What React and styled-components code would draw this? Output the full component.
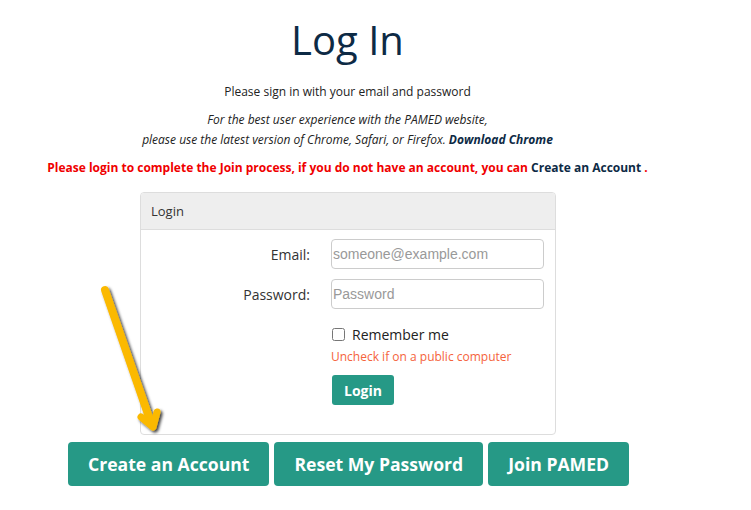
import styled, { createGlobalStyle } from 'styled-components';

const GlobalStyle = createGlobalStyle`
	body {
		margin: 0;
		background: #ffffff;
		font-family: 'Open Sans', 'Noto Sans', sans-serif;
		color: #333333;
	}
`;

export default function App() {
	return (
		<>
			<GlobalStyle />
			<Page>
				<Title>Log In</Title>
				<Subtitle>Please sign in with your email and password</Subtitle>
				<BrowserNote>
					For the best user experience with the PAMED website,
					<br />
					please use the latest version of Chrome, Safari, or Firefox.{' '}
					<strong>Download Chrome</strong>
				</BrowserNote>
				<Warning>
					Please login to complete the Join process, if you do not have an account, you can{' '}
					<span>Create an Account</span> .
				</Warning>

				<Panel>
					<PanelHeader>Login</PanelHeader>
					<PanelBody>
						<Label>Email:</Label>
						<Input type="text" placeholder="someone@example.com" />
						<Label>Password:</Label>
						<Input type="password" placeholder="Password" />
						<Field>
							<Remember>
								<input type="checkbox" />
								Remember me
							</Remember>
							<Hint>Uncheck if on a public computer</Hint>
							<SmallButton>Login</SmallButton>
						</Field>
					</PanelBody>
				</Panel>

				<Actions>
					<BigButton>Create an Account</BigButton>
					<BigButton>Reset My Password</BigButton>
					<BigButton>Join PAMED</BigButton>
				</Actions>

				<Arrow width="80" height="160" viewBox="0 0 80 160">
					<defs>
						<filter id="shadow" x="-50%" y="-20%" width="200%" height="140%">
							<feDropShadow dx="2" dy="2" stdDeviation="1.4" floodColor="#000" floodOpacity="0.75" />
						</filter>
					</defs>
					<g filter="url(#shadow)" fill="none" stroke="#fbb900" strokeLinecap="round" strokeLinejoin="round">
						<line x1="10" y1="10" x2="55" y2="140" strokeWidth="8" />
						<path d="M 46 137 L 58 147 L 62 132" strokeWidth="7" />
					</g>
				</Arrow>
			</Page>
		</>
	);
}

const Page = styled.div`
	position: relative;
	width: 695px;
	display: flex;
	flex-direction: column;
	align-items: center;
	text-align: center;
`;

const Title = styled.h1`
	margin: 15px 0 0;
	font-size: 40px;
	line-height: 50px;
	font-weight: 400;
	color: #0d2a45;
`;

const Subtitle = styled.p`
	margin: 18px 0 0;
	font-size: 12px;
	line-height: 18px;
	color: #222222;
`;

const BrowserNote = styled.p`
	margin: 9px 0 0;
	font-size: 12px;
	line-height: 20px;
	font-style: italic;
	color: #222222;

	strong {
		font-weight: 700;
		color: #0d2a45;
	}
`;

const Warning = styled.p`
	margin: 8px 0 0;
	font-size: 12px;
	line-height: 20px;
	font-weight: 700;
	color: #f00000;

	span {
		color: #0d2a45;
	}
`;

const Panel = styled.div`
	margin-top: 14px;
	margin-left: 1px;
	width: 414px;
	border: 1px solid #dddddd;
	border-radius: 4px;
	text-align: left;
	overflow: hidden;
`;

const PanelHeader = styled.div`
	height: 36px;
	padding: 0 10px;
	display: flex;
	align-items: center;
	background: #eeeeee;
	border-bottom: 1px solid #dddddd;
	font-size: 13px;
	color: #333333;
`;

const PanelBody = styled.div`
	display: grid;
	grid-template-columns: 169px 213px;
	column-gap: 21px;
	row-gap: 10px;
	align-items: center;
	padding: 9px 0 29px;
`;

const Label = styled.label`
	text-align: right;
	font-size: 14px;
	color: #333333;
`;

const Input = styled.input`
	box-sizing: border-box;
	width: 213px;
	height: 30px;
	padding: 0 1px;
	border: 1px solid #cccccc;
	border-radius: 4px;
	font-family: 'Liberation Sans', Arial, sans-serif;
	font-size: 14px;
	color: #333333;
	outline: none;

	&::placeholder {
		color: #999999;
	}
`;

const Field = styled.div`
	grid-column: 2;
	display: flex;
	flex-direction: column;
	align-items: flex-start;
	padding-top: 5px;
`;

const Remember = styled.label`
	display: flex;
	align-items: center;
	height: 20px;
	font-size: 14px;
	color: #222222;

	input {
		width: 13px;
		height: 13px;
		margin: 0 7px 0 1px;
	}
`;

const Hint = styled.div`
	margin-top: 3px;
	font-size: 12px;
	line-height: 20px;
	color: #f5633c;
`;

const SmallButton = styled.button`
	margin-top: 8px;
	margin-left: 1px;
	height: 30px;
	padding: 0 12px;
	border: none;
	border-radius: 3px;
	background: #269986;
	color: #ffffff;
	font-family: 'Open Sans', sans-serif;
	font-size: 14px;
	font-weight: 700;
`;

const Actions = styled.div`
	display: flex;
	gap: 5px;
	margin-top: 7px;
	margin-left: 2px;
`;

const BigButton = styled.button`
	height: 44px;
	padding: 0 20px;
	border: none;
	border-radius: 4px;
	background: #269986;
	color: #ffffff;
	font-family: 'Open Sans', sans-serif;
	font-size: 17.6px;
	font-weight: 700;
`;

const Arrow = styled.svg`
	position: absolute;
	left: 95px;
	top: 280px;
	overflow: visible;
`;
